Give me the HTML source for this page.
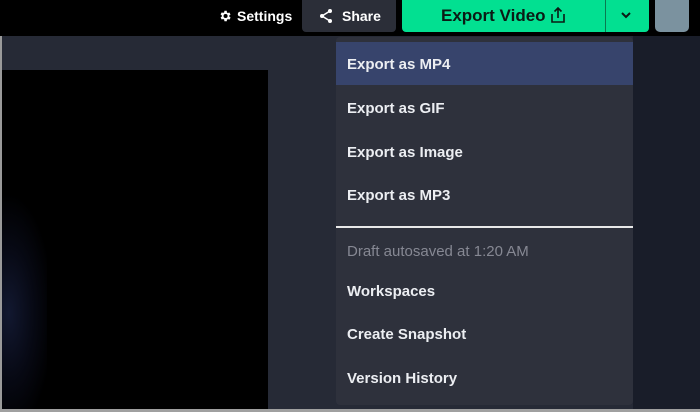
<!DOCTYPE html>
<html><head><style>
*{margin:0;padding:0;box-sizing:border-box}
body{width:700px;height:412px;overflow:hidden;background:#262a36;position:relative;font-family:"Liberation Sans",sans-serif;}
.abs{position:absolute}
.item{position:absolute;left:347px;font-size:15px;font-weight:bold;color:#eceef2;}
</style></head><body>
<div class="abs" style="left:0;top:0;width:700px;height:36px;background:#000"></div>
<div class="abs" style="left:0;top:36px;width:2px;height:376px;background:#9a9a9a"></div>
<div class="abs" style="left:0;top:409px;width:700px;height:3px;background:#a0a0a0"></div>
<div class="abs" style="left:2px;top:70px;width:266px;height:339px;background:#000"></div>
<div class="abs" style="left:2px;top:170px;width:45px;height:239px;background:radial-gradient(ellipse 100% 50% at 15% 60%,#121830 0%,#070914 55%,rgba(0,0,0,0) 100%)"></div>
<div class="abs" style="left:633px;top:36px;width:67px;height:373px;background:#191d29"></div>
<!-- settings -->
<svg class="abs" style="left:218px;top:9px" width="14" height="14" viewBox="0 0 24 24"><path fill="#fff" d="M19.4 13a7.5 7.5 0 0 0 0-2l2.1-1.6-2-3.5-2.5 1a7 7 0 0 0-1.7-1L15 3h-4l-.4 2.7a7 7 0 0 0-1.7 1l-2.5-1-2 3.5L6.5 11a7.5 7.5 0 0 0 0 2l-2.1 1.6 2 3.5 2.5-1a7 7 0 0 0 1.7 1L11 21h4l.4-2.7a7 7 0 0 0 1.7-1l2.5 1 2-3.5zM13 15.5a3.5 3.5 0 1 1 0-7 3.5 3.5 0 0 1 0 7z"/></svg>
<div class="abs" style="left:237px;top:8px;font-size:14px;font-weight:bold;color:#fff">Settings</div>
<div class="abs" style="left:302px;top:0;width:94px;height:32px;background:#2b2e38;border-radius:0 0 4px 4px"></div>
<svg class="abs" style="left:319px;top:8px" width="14" height="16" viewBox="0 0 14 16"><circle cx="11" cy="3" r="2" fill="#fff"/><circle cx="3" cy="8" r="2" fill="#fff"/><circle cx="11" cy="13" r="2" fill="#fff"/><path d="M11 3L3 8l8 5" stroke="#fff" stroke-width="1.5" fill="none"/></svg>
<div class="abs" style="left:342px;top:8px;font-size:14px;font-weight:bold;color:#fff">Share</div>
<div class="abs" style="left:402px;top:0;width:247px;height:32px;background:#02e091;border-radius:0 0 4px 4px"></div>
<div class="abs" style="left:605px;top:0;width:1px;height:32px;background:#0a7a50"></div>
<div class="abs" style="left:441px;top:6px;font-size:17px;font-weight:bold;color:#0b1a14">Export Video</div>
<svg class="abs" style="left:550px;top:6px" width="16" height="18" viewBox="0 0 16 18"><path d="M2 8v8h12V8M8 12V2M4.5 5.5L8 2l3.5 3.5" stroke="#0b1a14" stroke-width="1.6" fill="none"/></svg>
<svg class="abs" style="left:620px;top:11px" width="12" height="8" viewBox="0 0 12 8"><path d="M2 2l4 4 4-4" stroke="#0b1a14" stroke-width="2" fill="none"/></svg>
<div class="abs" style="left:655px;top:0;width:34px;height:32px;background:#7b929f;border-radius:0 0 5px 5px"></div>
<!-- menu -->
<div class="abs" style="left:336px;top:37px;width:297px;height:368px;background:#2e313c;border-radius:4px"></div>
<div class="abs" style="left:336px;top:42px;width:297px;height:43px;background:#37446c"></div>
<div class="item" style="top:56px">Export as MP4</div>
<div class="item" style="top:100px">Export as GIF</div>
<div class="item" style="top:144px">Export as Image</div>
<div class="item" style="top:187px">Export as MP3</div>
<div class="abs" style="left:336px;top:226px;width:297px;height:2px;background:#e8e8e8"></div>
<div class="item" style="top:243px;font-weight:normal;color:#868893">Draft autosaved at 1:20 AM</div>
<div class="item" style="top:283px">Workspaces</div>
<div class="item" style="top:326px">Create Snapshot</div>
<div class="item" style="top:370px">Version History</div>
</body></html>
